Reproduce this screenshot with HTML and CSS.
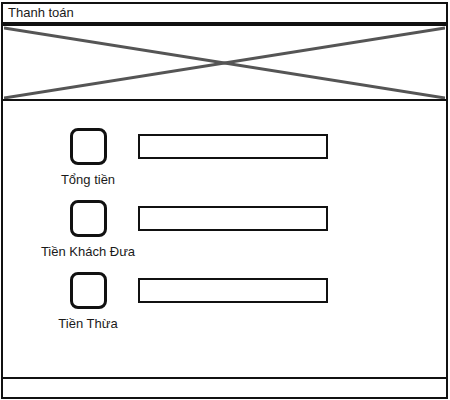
FILE: index.html
```html
<!DOCTYPE html>
<html lang="vi">
<head>
    <meta charset="UTF-8">
    <meta name="viewport" content="width=device-width, initial-scale=1.0">
    <title>Thanh toán</title>
    <link rel="stylesheet" href="styles.css">
</head>
<body>
    <div class="screen">
        <div class="title-bar">Thanh toán</div>
        <div class="banner">
            <svg class="placeholder" viewBox="0 0 440 72" preserveAspectRatio="none">
                <line x1="0" y1="2" x2="440" y2="71" />
                <line x1="0" y1="71" x2="440" y2="2" />
            </svg>
        </div>
        <div class="content">
            <div class="row">
                <div class="field">
                    <div class="check"></div>
                    <div class="label">Tổng tiền</div>
                </div>
                <div class="text-input"></div>
            </div>
            <div class="row">
                <div class="field">
                    <div class="check"></div>
                    <div class="label">Tiền Khách Đưa</div>
                </div>
                <div class="text-input"></div>
            </div>
            <div class="row">
                <div class="field">
                    <div class="check"></div>
                    <div class="label">Tiền Thừa</div>
                </div>
                <div class="text-input"></div>
            </div>
        </div>
        <div class="footer"></div>
    </div>
</body>
</html>
```

FILE: styles.css
```css
body {
    margin: 0;
    font-family: 'Liberation Sans', Arial, sans-serif;
    background: #fff;
    color: #1a1a1a;
}
.screen {
    width: 447px;
    height: 397px;
    margin: 2px 0 0 1px;
    display: flex;
    flex-direction: column;
}
.title-bar {
    height: 18px;
    border: 2px solid #111;
    padding-left: 5px;
    font-size: 13px;
    line-height: 18px;
}
.banner {
    height: 73px;
    border: 2px solid #111;
    display: flex;
    padding: 0 1px;
}
.placeholder {
    width: 100%;
    height: 100%;
}
.placeholder line {
    stroke: #555;
    stroke-width: 3;
}
.content {
    flex: 1;
    border-left: 2px solid #111;
    border-right: 2px solid #111;
    padding: 27px 0 0 37px;
    display: flex;
    flex-direction: column;
    gap: 12px;
}
.row {
    display: flex;
    align-items: flex-start;
    gap: 2px;
}
.field {
    width: 96px;
    display: flex;
    flex-direction: column;
    align-items: center;
}
.check {
    width: 31px;
    height: 31px;
    border: 3px solid #111;
    border-radius: 8px;
}
.label {
    margin-top: 7px;
    font-size: 13px;
    line-height: 16px;
    white-space: nowrap;
}
.text-input {
    width: 186px;
    height: 21px;
    margin-top: 6px;
    border: 2px solid #111;
}
.footer {
    height: 18px;
    border: 2px solid #111;
}
```
